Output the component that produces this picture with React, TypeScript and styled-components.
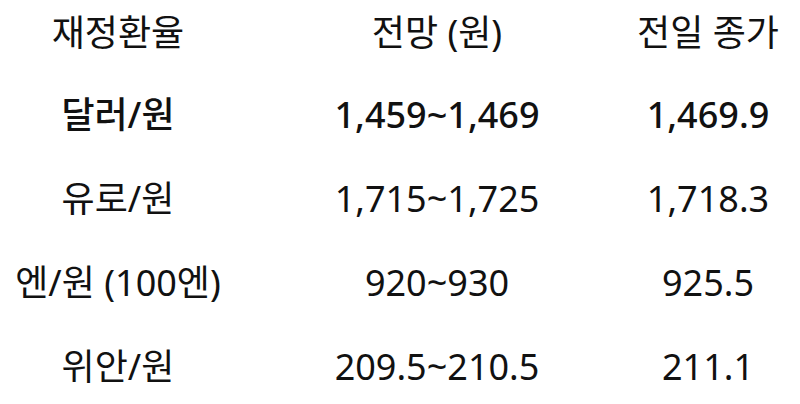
import styled, { createGlobalStyle } from "styled-components";

const GlobalStyle = createGlobalStyle`
    html, body {
        margin: 0;
        padding: 0;
        background: #ffffff;
    }
    body {
        font-family: "Noto Sans", "Noto Sans CJK KR", sans-serif;
        color: #111111;
    }
`;

type Row = {
    name: string;
    forecast: string;
    close: string;
    bold?: boolean;
};

const rows: Row[] = [
    { name: "달러/원", forecast: "1,459~1,469", close: "1,469.9", bold: true },
    { name: "유로/원", forecast: "1,715~1,725", close: "1,718.3" },
    { name: "엔/원 (100엔)", forecast: "920~930", close: "925.5" },
    { name: "위안/원", forecast: "209.5~210.5", close: "211.1" },
];

const Table = styled.div`
    width: 800px;
    height: 404px;
    display: grid;
    grid-template-columns: 236px 402px 140px;
    grid-template-rows: 70px repeat(4, 84px);
    overflow: hidden;
`;

const Line = styled.div`
    display: contents;
`;

const Cell = styled.div<{ $bold?: boolean; $header?: boolean }>`
    display: flex;
    align-items: center;
    justify-content: center;
    white-space: nowrap;
    font-size: 36px;
    line-height: 1;
    font-weight: ${(p) => (p.$bold ? 500 : 400)};
    margin-bottom: ${(p) => (p.$header ? "5px" : "0")};
    margin-top: ${(p) => (p.$header ? "0" : "5px")};
`;

export default function App() {
    return (
        <>
            <GlobalStyle />
            <Table>
                <Line>
                    <Cell $header>재정환율</Cell>
                    <Cell $header>전망 (원)</Cell>
                    <Cell $header>전일 종가</Cell>
                </Line>
                {rows.map((r) => (
                    <Line key={r.name}>
                        <Cell $bold={r.bold}>{r.name}</Cell>
                        <Cell $bold={r.bold}>{r.forecast}</Cell>
                        <Cell $bold={r.bold}>{r.close}</Cell>
                    </Line>
                ))}
            </Table>
        </>
    );
}
